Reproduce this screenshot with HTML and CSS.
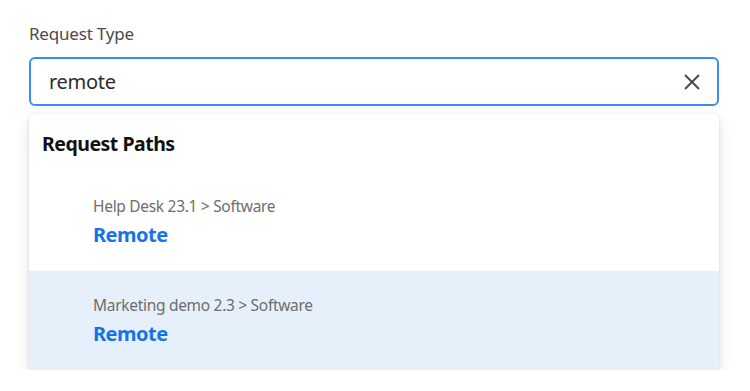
FILE: index.html
```html
<!DOCTYPE html>
<html lang="en">
<head>
  <meta charset="UTF-8">
  <title>Request Type</title>
  <link rel="stylesheet" href="styles.css">
</head>
<body>
  <div class="field">
    <!-- Label -->
    <label class="field-label" for="request-type">Request Type</label>

    <!-- Search Input -->
    <div class="search-box">
      <input id="request-type" class="search-input" type="text" value="remote">
      <button class="clear-btn" aria-label="Clear">
        <svg width="16" height="16" viewBox="0 0 16 16">
          <path d="M1 1 L15 15 M15 1 L1 15" stroke="#4b4b4b" stroke-width="2" fill="none"/>
        </svg>
      </button>
    </div>

    <!-- Results Dropdown -->
    <div class="dropdown">
      <div class="dropdown-title">Request Paths</div>

      <div class="result">
        <div class="result-path">Help Desk 23.1 &gt; Software</div>
        <div class="result-name">Remote</div>
      </div>

      <div class="result active">
        <div class="result-path">Marketing demo 2.3 &gt; Software</div>
        <div class="result-name">Remote</div>
      </div>
    </div>
  </div>
</body>
</html>
```

FILE: styles.css
```css
/* Global Styles */
* {
  margin: 0;
  padding: 0;
  box-sizing: border-box;
}

body {
  font-family: 'Noto Sans', sans-serif;
  background-color: #ffffff;
  color: #2c2c2c;
}

/* Field */
.field {
  width: 690px;
  margin-left: 29px;
  padding-top: 22px;
}

.field-label {
  display: block;
  font-size: 17px;
  line-height: 24px;
  letter-spacing: -0.2px;
  color: #4b4b4b;
}

/* Search Input */
.search-box {
  margin-top: 11px;
  height: 49px;
  border: 2px solid #378ef0;
  border-radius: 6px;
  display: flex;
  align-items: center;
  padding: 0 17px 0 18px;
}

.search-input {
  flex: 1;
  border: none;
  outline: none;
  font-family: inherit;
  font-size: 20px;
  letter-spacing: -0.3px;
  color: #2c2c2c;
  background: transparent;
}

.clear-btn {
  border: none;
  background: none;
  display: flex;
  align-items: center;
  cursor: pointer;
}

/* Dropdown */
.dropdown {
  margin-top: 8px;
  border-radius: 6px;
  background: #ffffff;
  box-shadow: 0 1px 4px rgba(0, 0, 0, 0.12), 0 6px 16px rgba(0, 0, 0, 0.09);
  overflow: hidden;
}

.dropdown-title {
  font-size: 19.5px;
  font-weight: bold;
  letter-spacing: -0.5px;
  color: #111111;
  line-height: 28px;
  padding: 16px 13px 12px;
}

.result {
  padding: 25px 64px 22px;
  height: 101px;
}

.result.active {
  background: #e6f0fa;
  height: 99px;
  padding-top: 23px;
}

.result-path {
  font-size: 15.5px;
  line-height: 22px;
  letter-spacing: -0.3px;
  color: #6e6e6e;
}

.result-name {
  font-size: 20px;
  font-weight: bold;
  line-height: 28px;
  letter-spacing: -0.5px;
  color: #1473e6;
  margin-top: 4px;
}
```
